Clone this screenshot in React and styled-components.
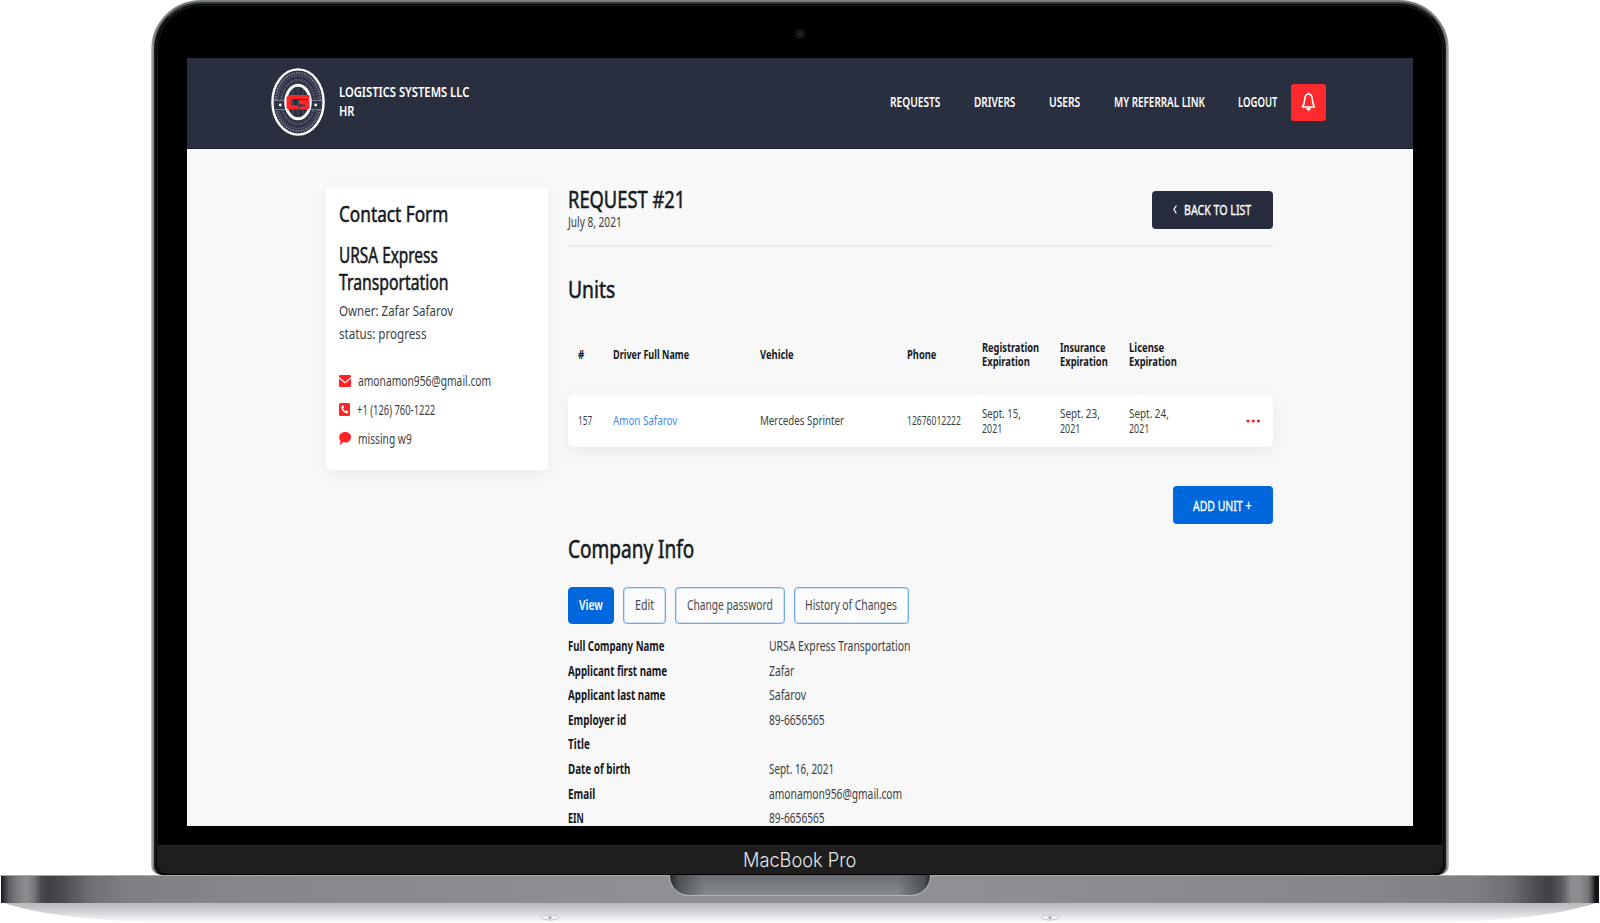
import React, { useLayoutEffect, useRef, useState } from "react";
import styled, { createGlobalStyle, css } from "styled-components";

const Global = createGlobalStyle`
  *, *::before, *::after { box-sizing: border-box; }
  html, body { margin: 0; padding: 0; background: #fff; overflow: hidden; }
  body { font-family: "Noto Sans", "Open Sans", sans-serif; color: #16191d; }
  button { font: inherit; border: 0; padding: 0; margin: 0; }
`;

/* ---------- condensed text ---------- */

const Line = styled.span`
  display: block;
  flex: none;
  width: ${(p) => p.$w}px;
  height: ${(p) => p.$lh}px;
  line-height: ${(p) => p.$lh}px;
  font-size: ${(p) => p.$size}px;
  font-weight: ${(p) => (p.$weight === 500 ? 400 : p.$weight)};
  -webkit-text-stroke: ${(p) => (p.$weight === 500 ? (p.$size > 18 ? 0.55 : 0.35) : 0)}px currentColor;
  color: ${(p) => p.$color};
  white-space: nowrap;
  text-align: left;
`;

const Glyphs = styled.span`
  display: inline-block;
  transform-origin: 0 50%;
`;

function Text({ w, size = 14, lh = 20, weight = 400, color = "inherit", children }) {
  const ref = useRef(null);
  const [scale, setScale] = useState(1);
  useLayoutEffect(() => {
    const natural = ref.current.offsetWidth;
    if (natural) setScale(w / natural);
  }, [w, size, weight, children]);
  return (
    <Line $w={w} $size={size} $lh={lh} $weight={weight} $color={color}>
      <Glyphs ref={ref} style={{ transform: `scaleX(${scale})` }}>{children}</Glyphs>
    </Line>
  );
}

/* ---------- laptop ---------- */

const Stage = styled.div`
  width: 1600px;
  height: 923px;
  display: flex;
  flex-direction: column;
  align-items: center;
  overflow: hidden;
  background: #fff;
`;

const Lid = styled.div`
  width: 1298px;
  height: 875px;
  flex: none;
  padding: 2px 3px 0;
  border-radius: 50px 50px 10px 10px;
  background: linear-gradient(90deg, #c6c9cb 0, #85898a 2px, #7b7f80 4px, #7b7f80 1294px, #85898a 1296px, #c6c9cb 1298px);
`;

const Bezel = styled.div`
  height: 873px;
  display: flex;
  flex-direction: column;
  align-items: center;
  border-radius: 47px 47px 9px 9px;
  border: 2px solid #17191a;
  border-top: 2px solid #34383a;
  border-bottom: 1px solid #000;
  background: #000;
  box-shadow: inset 0 0 0 1px #000, inset 0 0 0 2px #1d1f20;
`;

const CameraBar = styled.div`
  height: 54px;
  flex: none;
  display: flex;
  align-items: center;
  padding-top: 6px;
`;

const Screen = styled.div`
  width: 1226px;
  height: 768px;
  flex: none;
  overflow: hidden;
  background: #f8f8f8;
`;

const Chin = styled.div`
  width: 1284px;
  height: 29px;
  margin-top: 19px;
  padding-right: 2px;
  display: flex;
  justify-content: center;
  background: #1e1e1e;
  border-top: 1px solid #292929;
  border-radius: 0 0 10px 10px;
  font-family: Inter, sans-serif;
`;

const Deck = styled.div`
  width: 1600px;
  height: 28px;
  flex: none;
  display: flex;
  justify-content: center;
  border-top: 1px solid #a9adad;
  background: linear-gradient(90deg,
    #fff 0, #fff 1px, #1b1d1f 1.5px, #3a3c3f 5px, #5f6063 9px, #77787b 16px, #8d8e91 26px, #77787b 34px, #4b4c50 41px, #3f4044 50px,
    #4a4b4f 62px, #6e6f73 90px, #7f8084 130px, #86878b 250px, #8f9094 650px, #8f9094 950px, #86878b 1350px,
    #7f8084 1470px, #6e6f73 1510px, #4a4b4f 1538px, #3f4044 1550px, #5b5c60 1562px,
    #8d8e91 1572px, #8a8b8e 1580px, #77787b 1588px, #4c4d50 1592px, #0a0b0c 1596px, #16181a 1598.5px, #fff 1599px);
`;

const Notch = styled.div`
  width: 262px;
  height: 21px;
  margin-top: -1px;
  border-radius: 0 0 20px 20px;
  border: 1px solid #b4b7b8;
  border-top: 0;
  background:
    linear-gradient(90deg, #24282b 0, rgba(60,64,67,.7) 8px, rgba(100,103,106,0) 34px, rgba(100,103,106,0) 228px, rgba(60,64,67,.7) 254px, #24282b 262px),
    linear-gradient(#6c6f73, #85888c);
`;

const Underside = styled.svg`
  display: block;
  flex: none;
`;

/* ---------- site header ---------- */

const Header = styled.header`
  height: 91px;
  display: flex;
  align-items: center;
  padding: 0 0 2px 84px;
  background: #2a2f40;
  border-bottom: 1px solid #171d30;
  color: #fff;
`;

const Brand = styled.div`
  width: 619px;
  display: flex;
  align-items: center;
  gap: 13.5px;
`;

const BrandName = styled.div`
  padding-bottom: 2px;
`;

const Nav = styled.nav`
  display: flex;
  align-items: center;
`;

const NavItem = styled.a`
  margin-right: ${(p) => p.$gap}px;
  padding-bottom: 1px;
`;

const BellButton = styled.button`
  width: 35px;
  height: 37px;
  display: grid;
  place-items: center;
  border-radius: 3px;
  background: #ff2a2d;
`;

/* ---------- page body ---------- */

const Body = styled.main`
  display: flex;
  align-items: flex-start;
  padding: 38px 0 0 139px;
`;

const Card = styled.aside`
  width: 222px;
  height: 283px;
  padding: 14px 13.3px;
  border-radius: 4px;
  background: #fff;
  box-shadow: 0 4px 14px rgba(0, 0, 0, 0.055);
`;

const OwnerBlock = styled.div`
  margin-top: 17px;
`;

const Details = styled.div`
  margin-top: 3px;
`;

const Contacts = styled.div`
  margin-top: 21px;
`;

const ContactRow = styled.div`
  height: 29px;
  display: flex;
  align-items: center;
  gap: 6.5px;
`;

const Content = styled.section`
  width: 705px;
  margin-left: 19.5px;
`;

const TitleBar = styled.div`
  height: 60px;
  display: flex;
  justify-content: space-between;
  align-items: flex-start;
  border-bottom: 2px solid #ececec;
`;

const Button = styled.button`
  display: flex;
  align-items: center;
  justify-content: center;
  border-radius: 4px;
  color: #fff;
  ${(p) => p.$kind === "dark"
    ? css`width: 121px; height: 38px; margin-top: 4px; padding-bottom: 1.5px; gap: 7px; background: #262c3d;`
    : css`width: 100px; height: 38px; padding-bottom: 1px; background: #0068dc;`}
`;

const Units = styled.div`
  margin-top: 25px;
`;

const UnitTable = styled.div`
  margin-top: 8px;
`;

const columns = "35px 146.5px 147px 75px 78px 69px 1fr auto";

const HeadRow = styled.div`
  height: 81px;
  display: grid;
  grid-template-columns: ${columns};
  align-items: center;
  padding: 0 12.5px 1px 10.5px;
`;

const UnitRow = styled.div`
  height: 52px;
  display: grid;
  grid-template-columns: ${columns};
  align-items: center;
  padding: 0 12.5px 1px 10.5px;
  border-radius: 6px;
  background: #fff;
  color: #3b3f44;
  box-shadow: 0 5px 16px rgba(0, 0, 0, 0.06);
`;

const Actions = styled.div`
  display: flex;
  justify-content: flex-end;
  margin-top: 39px;
`;

const Company = styled.div`
  margin-top: 8px;
`;

const Tabs = styled.div`
  display: flex;
  gap: 9px;
  margin: 21px 0 10px;
`;

const Tab = styled.button`
  width: ${(p) => p.$w}px;
  height: 37px;
  padding-bottom: 1px;
  display: grid;
  place-items: center;
  border-radius: 4px;
  background: ${(p) => (p.$active ? "#0068dc" : "#fbfbfb")};
  border: 1px solid ${(p) => (p.$active ? "#0068dc" : "#6fa9ea")};
  box-shadow: ${(p) => (p.$active ? "none" : "inset 0 0 0 0.5px #a3c8f2")};
  color: ${(p) => (p.$active ? "#fff" : "#454a50")};
`;

const Field = styled.div`
  height: 24.55px;
  display: grid;
  grid-template-columns: 201px 1fr;
  align-items: center;
`;

/* ---------- drawings ---------- */

function Logo() {
  return (
    <svg width="54" height="68" viewBox="0 0 54 68">
      <ellipse cx="27" cy="34" rx="25.600" ry="32.600" fill="#2d3244" stroke="#fff" strokeWidth="2.400" />
      <ellipse cx="27" cy="34" rx="22.500" ry="29" fill="none" stroke="#7d8290" strokeWidth="2" strokeDasharray="1.4 1.2" />
      <ellipse cx="27" cy="34" rx="20.300" ry="26.500" fill="none" stroke="#5d6272" strokeWidth="0.900" />
      <ellipse cx="27" cy="34" rx="16.800" ry="22" fill="none" stroke="#7c818e" strokeWidth="2.600" strokeDasharray="1.5 1.3 2 0.9" opacity=".5" />
      <path d="M3 32.500h12M3 41.500h12M39 32.500h12M39 41.500h12" stroke="#7d8290" strokeWidth="0.900" />
      <rect x="4" y="33" width="10" height="8" fill="#2d3244" />
      <rect x="40" y="33" width="10" height="8" fill="#2d3244" />
      <circle cx="9.300" cy="37" r="1.400" fill="#fff" />
      <circle cx="44.700" cy="37" r="1.400" fill="#fff" />
      <ellipse cx="27" cy="34" rx="12.300" ry="16.800" fill="#2a2f40" stroke="#fff" strokeWidth="3" />
      <path d="M22 21v26M27 20v28M32 21v26" stroke="#4b5060" strokeWidth="1" />
      <path d="M17.500 27H38.500V31H20.500V37.300H27V41.500H17L15.500 40V29Z" fill="#ff2528" />
      <path d="M28 32H38.500V40L37 41.500H28V38.500H34V36.500H28Z" fill="#ff2528" />
    </svg>
  );
}

const Bell = () => (
  <svg width="15" height="20" viewBox="0 0 15 20">
    <path d="M7.500 1.800C4.800 2.300 3.900 4.400 3.700 7.200C3.500 10.800 3 12.800 1.500 15H13.500C12 12.800 11.500 10.800 11.300 7.200C11.100 4.400 10.200 2.300 7.500 1.800Z" fill="none" stroke="#fff" strokeWidth="1.600" strokeLinejoin="round" />
    <path d="M6.800 0.500h1.400v1.500H6.800zM5.300 16h4.400a2.200 2.800 0 0 1-4.400 0Z" fill="#fff" />
  </svg>
);

const Envelope = () => (
  <svg width="12" height="12" viewBox="0 0 12 12">
    <path d="M1 0h10a1 1 0 0 1 1 1v1L6 7 0 2V1a1 1 0 0 1 1-1ZM0 3.600l6 5 6-5V11a1 1 0 0 1-1 1H1a1 1 0 0 1-1-1Z" fill="#ff2328" />
  </svg>
);

const Phone = () => (
  <svg width="11" height="13" viewBox="0 0 11 13">
    <rect width="11" height="13" rx="1.600" fill="#ff2328" />
    <path d="M2.500 2.600l1.500-.5 1 2.300-.9 1c.5 1.300 1.300 2.300 2.300 2.900l.9-1 1.900 1.100-.4 1.900C5.300 11 2 7 2.500 2.600Z" fill="#fff" />
  </svg>
);

const Bubble = () => (
  <svg width="12" height="13" viewBox="0 0 12 13">
    <path d="M6.200 0C9.500 0 12 2.200 12 5.200s-2.500 5.300-5.800 5.300c-.8 0-1.500-.1-2.200-.4C3.200 11.700 1.800 12.800.3 13c.7-1 1.200-2.300 1.200-4C.6 8 .2 6.700.2 5.200.2 2.200 2.900 0 6.200 0Z" fill="#ff2328" />
  </svg>
);

const Chevron = () => (
  <svg width="4" height="9" viewBox="0 0 4 9">
    <path d="M3.400.7L.9 4.500l2.500 3.800" fill="none" stroke="#fff" strokeWidth="1.200" />
  </svg>
);

const Dots = () => (
  <svg width="14" height="4" viewBox="0 0 14 4">
    <circle cx="2" cy="2" r="1.600" fill="#ff1f1f" />
    <circle cx="7.200" cy="2" r="1.600" fill="#ff1f1f" />
    <circle cx="12.400" cy="2" r="1.600" fill="#ff1f1f" />
  </svg>
);

const Camera = () => (
  <svg width="10" height="10" viewBox="0 0 10 10">
    <circle cx="5" cy="5" r="4" fill="#0c0d0f" stroke="#232528" strokeWidth="1" />
    <circle cx="5" cy="5" r="1.600" fill="#2a3038" />
  </svg>
);

/* ---------- data ---------- */

const nav = [
  ["REQUESTS", 50, 33.5],
  ["DRIVERS", 41.5, 33.5],
  ["USERS", 31.5, 33.5],
  ["MY REFERRAL LINK", 91, 33.5],
  ["LOGOUT", 39.5, 13.5],
];

const heads = [
  [["#", 6]],
  [["Driver Full Name", 76]],
  [["Vehicle", 34]],
  [["Phone", 29.5]],
  [["Registration", 57], ["Expiration", 47.5]],
  [["Insurance", 45.5], ["Expiration", 47.5]],
  [["License", 35], ["Expiration", 47.5]],
];

const cells = [
  [["157", 14]],
  [["Amon Safarov", 64]],
  [["Mercedes Sprinter", 84]],
  [["12676012222", 54]],
  [["Sept. 15,", 38.5], ["2021", 20.5]],
  [["Sept. 23,", 39.5], ["2021", 20.5]],
  [["Sept. 24,", 39.5], ["2021", 20.5]],
];

const tabs = [
  ["View", 46, 23.5, true],
  ["Edit", 43, 19],
  ["Change password", 110, 86],
  ["History of Changes", 115, 92],
];

const fields = [
  ["Full Company Name", 96.5, "URSA Express Transportation", 141.5],
  ["Applicant first name", 99, "Zafar", 25],
  ["Applicant last name", 97.5, "Safarov", 37],
  ["Employer id", 58, "89-6656565", 56],
  ["Title", 22],
  ["Date of birth", 62.5, "Sept. 16, 2021", 65],
  ["Email", 27, "amonamon956@gmail.com", 133.5],
  ["EIN", 16, "89-6656565", 56],
];

const grey = "#3b3f44";

export default function App() {
  return (
    <Stage>
      <Global />
      <Lid>
        <Bezel>
          <CameraBar><Camera /></CameraBar>
          <Screen>
            <Header>
              <Brand>
                <Logo />
                <BrandName>
                  <Text w={130} size={15} lh={19} weight={600}>LOGISTICS SYSTEMS LLC</Text>
                  <Text w={15.5} size={15} lh={19} weight={600}>HR</Text>
                </BrandName>
              </Brand>
              <Nav>
                {nav.map(([label, w, gap]) => (
                  <NavItem key={label} $gap={gap}>
                    <Text w={w} size={14} weight={600}>{label}</Text>
                  </NavItem>
                ))}
                <BellButton><Bell /></BellButton>
              </Nav>
            </Header>
            <Body>
              <Card>
                <Text w={109.5} size={22} lh={24} weight={500}>Contact Form</Text>
                <OwnerBlock>
                  <Text w={99} size={21} lh={27} weight={500}>URSA Express</Text>
                  <Text w={109.5} size={21} lh={27} weight={500}>Transportation</Text>
                </OwnerBlock>
                <Details>
                  <Text w={114.5} size={15} lh={23} color={grey}>Owner: Zafar Safarov</Text>
                  <Text w={87.5} size={15} lh={23} color={grey}>status: progress</Text>
                </Details>
                <Contacts>
                  <ContactRow><Envelope /><Text w={133.5} color={grey}>amonamon956@gmail.com</Text></ContactRow>
                  <ContactRow><Phone /><Text w={78} color={grey}>+1 (126) 760-1222</Text></ContactRow>
                  <ContactRow><Bubble /><Text w={54} color={grey}>missing w9</Text></ContactRow>
                </Contacts>
              </Card>
              <Content>
                <TitleBar>
                  <div>
                    <Text w={117.5} size={24} lh={24} weight={500}>REQUEST #21</Text>
                    <Text w={53.5} size={14} lh={22} color={grey}>July 8, 2021</Text>
                  </div>
                  <Button $kind="dark">
                    <Chevron />
                    <Text w={67.5} size={14.5} weight={500}>BACK TO LIST</Text>
                  </Button>
                </TitleBar>
                <Units>
                  <Text w={47.5} size={24} lh={34} weight={500}>Units</Text>
                  <UnitTable>
                    <HeadRow>
                      {heads.map((lines, i) => (
                        <div key={i}>
                          {lines.map(([t, w]) => <Text key={t} w={w} size={13} lh={14.2} weight={700}>{t}</Text>)}
                        </div>
                      ))}
                    </HeadRow>
                    <UnitRow>
                      {cells.map((lines, i) => (
                        <div key={i}>
                          {lines.map(([t, w]) => (
                            <Text key={t} w={w} size={13} lh={14.2} color={i === 1 ? "#3f87f5" : "inherit"}>{t}</Text>
                          ))}
                        </div>
                      ))}
                      <Dots />
                    </UnitRow>
                  </UnitTable>
                  <Actions>
                    <Button><Text w={58.5} size={14.5} weight={500}>ADD UNIT +</Text></Button>
                  </Actions>
                </Units>
                <Company>
                  <Text w={126.5} size={24.5} lh={34} weight={500}>Company Info</Text>
                  <Tabs>
                    {tabs.map(([t, w, tw, active]) => (
                      <Tab key={t} $w={w} $active={active}>
                        <Text w={tw} size={14} weight={active ? 600 : 400}>{t}</Text>
                      </Tab>
                    ))}
                  </Tabs>
                  {fields.map(([k, kw, v, vw]) => (
                    <Field key={k}>
                      <Text w={kw} weight={700}>{k}</Text>
                      {v && <Text w={vw} color={grey}>{v}</Text>}
                    </Field>
                  ))}
                </Company>
              </Content>
            </Body>
          </Screen>
          <Chin><Text w={113} size={20} lh={28} weight={300} color="#e4e5e7">MacBook Pro</Text></Chin>
        </Bezel>
      </Lid>
      <Deck><Notch /></Deck>
      <Underside width="1600" height="20" viewBox="0 0 1600 20">
        <defs>
          <linearGradient id="shade" x1="0" y1="0" x2="0" y2="1">
            <stop offset="0" stopColor="#b9babe" />
            <stop offset="0.3" stopColor="#c6c7cb" />
            <stop offset="1" stopColor="#fbfbfc" />
          </linearGradient>
        </defs>
        <path d="M4 0H1596C1560 12 1500 19 1430 19H170C100 19 40 12 4 0Z" fill="url(#shade)" />
        {[550, 1050].map((x) => (
          <g key={x}>
            <ellipse cx={x} cy="14.500" rx="9" ry="2.500" fill="#eff0f2" stroke="#c3c5c8" strokeWidth="1" />
            <circle cx={x} cy="14.500" r="1.500" fill="#a4a7ab" />
          </g>
        ))}
      </Underside>
    </Stage>
  );
}
